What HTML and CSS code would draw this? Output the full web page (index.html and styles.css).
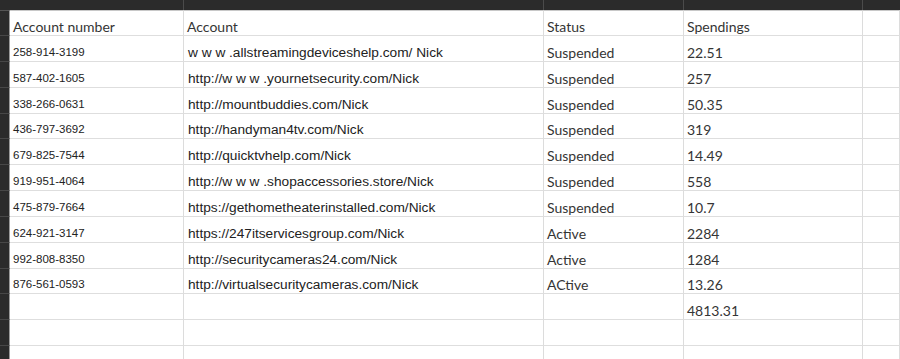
FILE: index.html
```html
<!DOCTYPE html>
<html lang="en">
<head>
<meta charset="utf-8">
<title>Accounts</title>
<link rel="stylesheet" href="styles.css">
</head>
<body>
<div class="sheet">
  <div class="corner"></div>
  <div class="colhead"></div>
  <div class="colhead"></div>
  <div class="colhead"></div>
  <div class="colhead"></div>
  <div class="colhead last"></div>

  <div class="rowhead first"></div>
  <div class="cell hdr first">Account number</div>
  <div class="cell hdr first">Account</div>
  <div class="cell hdr first">Status</div>
  <div class="cell hdr first">Spendings</div>
  <div class="cell first"></div>

  <div class="rowhead"></div><div class="cell num">258-914-3199</div><div class="cell url">w w w .allstreamingdeviceshelp.com/ Nick</div><div class="cell txt">Suspended</div><div class="cell txt">22.51</div><div class="cell"></div>
  <div class="rowhead"></div><div class="cell num">587-402-1605</div><div class="cell url">http://w w w .yournetsecurity.com/Nick</div><div class="cell txt">Suspended</div><div class="cell txt">257</div><div class="cell"></div>
  <div class="rowhead"></div><div class="cell num">338-266-0631</div><div class="cell url">http://mountbuddies.com/Nick</div><div class="cell txt">Suspended</div><div class="cell txt">50.35</div><div class="cell"></div>
  <div class="rowhead"></div><div class="cell num">436-797-3692</div><div class="cell url">http://handyman4tv.com/Nick</div><div class="cell txt">Suspended</div><div class="cell txt">319</div><div class="cell"></div>
  <div class="rowhead"></div><div class="cell num">679-825-7544</div><div class="cell url">http://quicktvhelp.com/Nick</div><div class="cell txt">Suspended</div><div class="cell txt">14.49</div><div class="cell"></div>
  <div class="rowhead"></div><div class="cell num">919-951-4064</div><div class="cell url">http://w w w .shopaccessories.store/Nick</div><div class="cell txt">Suspended</div><div class="cell txt">558</div><div class="cell"></div>
  <div class="rowhead"></div><div class="cell num">475-879-7664</div><div class="cell url">https://gethometheaterinstalled.com/Nick</div><div class="cell txt">Suspended</div><div class="cell txt">10.7</div><div class="cell"></div>
  <div class="rowhead"></div><div class="cell num">624-921-3147</div><div class="cell url">https://247itservicesgroup.com/Nick</div><div class="cell txt">Active</div><div class="cell txt">2284</div><div class="cell"></div>
  <div class="rowhead"></div><div class="cell num">992-808-8350</div><div class="cell url">http://securitycameras24.com/Nick</div><div class="cell txt">Active</div><div class="cell txt">1284</div><div class="cell"></div>
  <div class="rowhead"></div><div class="cell num">876-561-0593</div><div class="cell url">http://virtualsecuritycameras.com/Nick</div><div class="cell txt">ACtive</div><div class="cell txt">13.26</div><div class="cell"></div>
  <div class="rowhead"></div><div class="cell"></div><div class="cell"></div><div class="cell"></div><div class="cell txt">4813.31</div><div class="cell"></div>
  <div class="rowhead"></div><div class="cell"></div><div class="cell"></div><div class="cell"></div><div class="cell"></div><div class="cell"></div>
  <div class="rowhead"></div><div class="cell"></div><div class="cell"></div><div class="cell"></div><div class="cell"></div><div class="cell"></div>
</div>
</body>
</html>
```
FILE: styles.css
```css
html, body {
  margin: 0;
  padding: 0;
  background: #ffffff;
  overflow: hidden;
}

.sheet {
  display: grid;
  grid-template-columns: 10px 174px 360px 140px 179px 1fr;
  grid-template-rows: 10px 26px;
  grid-auto-rows: 25.85px;
  width: 900px;
  height: 359px;
  overflow: hidden;
}

.corner {
  background: #2b2b2b;
}

.colhead {
  background: #2b2b2b;
  border-right: 1px solid #4b4b4b;
  box-sizing: border-box;
}

.colhead.last {
  border-right: none;
}

.rowhead {
  background: #2b2b2b;
  border-bottom: 1px solid #474747;
  border-right: 1px solid #9a9a9a;
  box-sizing: border-box;
}

.rowhead.first {
  border-top: 1px solid #555;
}

.cell {
  box-sizing: border-box;
  border-right: 1px solid #dcdcdc;
  border-bottom: 1px solid #dedede;
  display: flex;
  align-items: flex-end;
  padding: 0 4px 0 3px;
  white-space: nowrap;
  overflow: hidden;
  color: #2a2a2a;
}

.cell.first {
  border-top: 1px solid #c8c8c8;
}

.hdr,
.txt {
  font-family: Lato, "Open Sans", sans-serif;
  font-size: 14px;
  line-height: 15px;
  color: #353535;
  padding-bottom: 1px;
}

.num {
  font-family: "Liberation Sans", Arial, sans-serif;
  font-size: 11.5px;
  line-height: 13px;
  color: #222;
  padding-bottom: 2px;
}

.url {
  font-family: "Liberation Sans", Arial, sans-serif;
  font-size: 13.7px;
  line-height: 15px;
  color: #222;
  padding-left: 4px;
  padding-bottom: 1px;
}
```
